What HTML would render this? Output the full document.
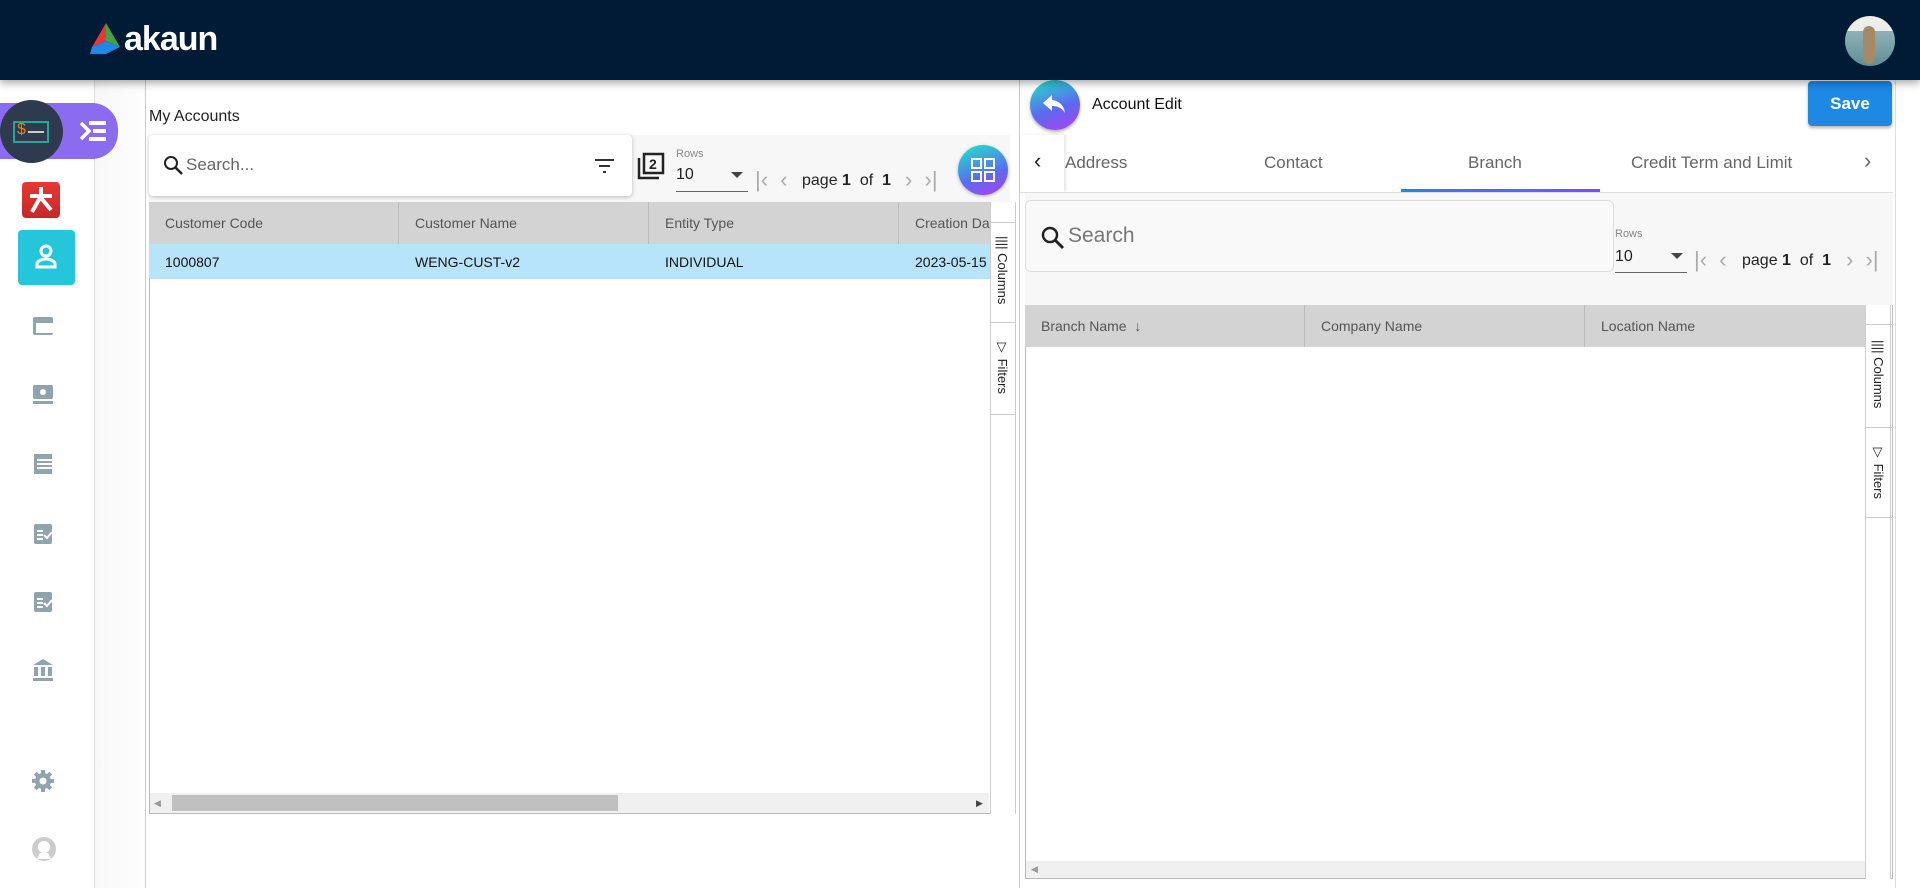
<!DOCTYPE html>
<html><head><meta charset="utf-8"><style>
*{box-sizing:border-box;margin:0;padding:0}
body{width:1920px;height:888px;overflow:hidden;background:#fff;font-family:"Liberation Sans",sans-serif;position:relative}
.a{position:absolute}
.hdr{left:0;top:0;width:1920px;height:80px;background:#011a35;box-shadow:0 3px 8px rgba(0,0,0,.35);z-index:5}
.gi{fill:#90a4ae}
.colh{position:absolute;top:0;height:42px;line-height:42px;font-size:14px;color:#555;padding-left:16px;border-right:1px solid #bbb}
.side{position:absolute;width:26px;background:#fff;border:1px solid #ccc}
.vt{position:absolute;writing-mode:vertical-rl;font-size:13px;color:#222}
.pg{font-size:16px;color:#222}
.ch{font-size:22px;color:#aaa}
</style></head><body>
<div class="a hdr">
 <svg class="a" style="left:88px;top:23px" width="36" height="32" viewBox="0 0 36 32"><polygon points="18,0 4,24 18,18" fill="#e53935"/><polygon points="18,0 32,24 18,18" fill="#43a047"/><polygon points="4,24 18,18 32,24 18,31 2,31" fill="#1e88e5"/></svg>
 <div class="a" style="left:124px;top:20px;color:#fff;font-size:34px;font-weight:bold;letter-spacing:-1px">akaun</div>
 <div class="a" style="left:1845px;top:16px;width:50px;height:50px;border-radius:50%;background:linear-gradient(#eeeee8 0 30%,#8fb1b6 30%,#5f8f96);overflow:hidden"><div class="a" style="left:18px;top:10px;width:12px;height:38px;background:#a58a6a;border-radius:6px"></div></div>
</div>
<!-- sidebar -->
<div class="a" style="left:94px;top:80px;width:52px;height:808px;background:linear-gradient(90deg,#f8f8f8,#fdfdfd);border-left:1px solid #ddd;border-right:1px solid #ccc"></div>
<div class="a" style="left:0;top:103px;width:95px;height:56px;background:#8b6cf0"></div>
<div class="a" style="left:66px;top:103px;width:52px;height:56px;border-radius:28px;background:#8b6cf0"></div>
<div class="a" style="left:0;top:100px;width:63px;height:63px;border-radius:50%;background:#2e3b4e"></div>
<div class="a" style="left:13px;top:121px;width:36px;height:22px;border:2px solid #26a69a"></div>
<div class="a" style="left:17px;top:121px;color:#f57c00;font-size:16px">$</div>
<div class="a" style="left:28px;top:131px;width:16px;height:2px;background:#ccc"></div>
<svg class="a" style="left:79px;top:120px" width="28" height="22"><path d="M2 3l8 8-8 8" stroke="#fff" stroke-width="3.5" fill="none"/><rect x="10" y="1" width="17" height="4" fill="#fff"/><rect x="14" y="9" width="13" height="4" fill="#fff"/><rect x="10" y="17" width="17" height="4" fill="#fff"/></svg>
<div class="a" style="left:22px;top:182px;width:38px;height:36px;border-radius:4px;background:linear-gradient(#e53935,#c62828)"></div>
<svg class="a" style="left:24px;top:184px" width="34" height="32"><path d="M17 3v10M6 12h22M17 12L8 28M17 14l10 12" stroke="#fff" stroke-width="4" fill="none"/></svg>
<div class="a" style="left:18px;top:230px;width:57px;height:55px;border-radius:4px;background:#26c6da"></div>
<svg class="a" style="left:34px;top:243px" width="24" height="28"><circle cx="12" cy="8" r="5" stroke="#fff" stroke-width="3" fill="none"/><path d="M3 24v-3c0-3 5-5 9-5s9 2 9 5v3z" stroke="#fff" stroke-width="3" fill="none"/></svg>
<svg class="a" style="left:31px;top:315px" width="24" height="22"><rect class="gi" x="2" y="2" width="20" height="18" rx="2"/><rect x="5" y="8" width="17" height="10" fill="#fff"/></svg>
<svg class="a" style="left:31px;top:383px" width="24" height="22"><rect class="gi" x="2" y="2" width="20" height="14" rx="2"/><circle cx="12" cy="9" r="3" fill="#fff"/><rect class="gi" x="2" y="18" width="20" height="3"/></svg>
<svg class="a" style="left:31px;top:452px" width="24" height="24"><rect class="gi" x="3" y="2" width="18" height="20"/><g fill="#fff"><rect x="6" y="7" width="15" height="2"/><rect x="6" y="11" width="15" height="2"/><rect x="6" y="15" width="15" height="2"/></g></svg>
<svg class="a" style="left:31px;top:522px" width="24" height="22"><rect class="gi" x="3" y="2" width="18" height="20" rx="2"/><g fill="#fff"><rect x="6" y="8" width="6" height="2"/><rect x="6" y="12" width="6" height="2"/><rect x="6" y="16" width="6" height="2"/></g><path d="M13 13l3 3 5-6" stroke="#fff" stroke-width="2" fill="none"/></svg>
<svg class="a" style="left:31px;top:590px" width="24" height="22"><rect class="gi" x="3" y="2" width="18" height="20" rx="2"/><g fill="#fff"><rect x="6" y="8" width="6" height="2"/><rect x="6" y="12" width="6" height="2"/><rect x="6" y="16" width="6" height="2"/></g><path d="M13 13l3 3 5-6" stroke="#fff" stroke-width="2" fill="none"/></svg>
<svg class="a" style="left:31px;top:657px" width="24" height="26"><polygon class="gi" points="12,2 22,8 2,8"/><rect class="gi" x="3" y="10" width="4" height="9"/><rect class="gi" x="10" y="10" width="4" height="9"/><rect class="gi" x="17" y="10" width="4" height="9"/><rect class="gi" x="2" y="21" width="20" height="3"/></svg>
<svg class="a" style="left:31px;top:769px" width="24" height="24"><circle class="gi" cx="12" cy="12" r="8"/><g class="gi"><rect x="10" y="1" width="4" height="22"/><rect x="1" y="10" width="22" height="4"/><rect x="10" y="1" width="4" height="22" transform="rotate(45 12 12)"/><rect x="10" y="1" width="4" height="22" transform="rotate(-45 12 12)"/></g><circle cx="12" cy="12" r="3.5" fill="#fff"/></svg>
<svg class="a" style="left:31px;top:836px" width="26" height="26"><circle cx="13" cy="13" r="12" fill="#ccc"/><circle cx="13" cy="11" r="6" fill="#fff"/><path d="M6 23h14l-3-6h-8z" fill="#fff"/></svg>

<!-- left pane -->
<div class="a" style="left:149px;top:108px;font-size:16px;color:#222">My Accounts</div>
<div class="a" style="left:149px;top:135px;width:861px;height:67px;background:#f7f7f7"></div>
<div class="a" style="left:149px;top:135px;width:483px;height:61px;background:#fff;border-radius:4px;box-shadow:0 1px 4px rgba(0,0,0,.25)"></div>
<svg class="a" style="left:163px;top:155px" width="22" height="22"><circle cx="8" cy="8" r="6" stroke="#222" stroke-width="2" fill="none"/><path d="M12 12l7 7" stroke="#222" stroke-width="2.5"/></svg>
<div class="a" style="left:186px;top:155px;font-size:17px;color:#666">Search...</div>
<svg class="a" style="left:594px;top:158px" width="22" height="16"><rect x="1" y="1" width="19" height="2" fill="#333"/><rect x="5" y="7" width="11" height="2" fill="#333"/><rect x="9" y="13" width="3" height="2" fill="#333"/></svg>
<svg class="a" style="left:636px;top:152px" width="30" height="30"><path d="M3 6v20h20" stroke="#222" stroke-width="2.5" fill="none"/><rect x="8" y="2" width="19" height="19" stroke="#222" stroke-width="2.5" fill="none"/><text x="13" y="17" font-size="14" font-weight="bold" font-family="Liberation Sans" fill="#222">2</text></svg>
<div class="a" style="left:676px;top:148px;font-size:11px;color:#888">Rows</div>
<div class="a" style="left:676px;top:166px;font-size:16px;color:#222">10</div>
<div class="a" style="left:731px;top:172px;border:6px solid transparent;border-top:6px solid #444"></div>
<div class="a" style="left:676px;top:191px;width:72px;height:1px;background:#666"></div>
<div class="a ch" style="left:755px;top:167px">|‹&nbsp;&nbsp;‹</div>
<div class="a pg" style="left:802px;top:172px">page <b>1</b>&nbsp; of&nbsp; <b>1</b></div>
<div class="a ch" style="left:905px;top:167px">›&nbsp;&nbsp;›|</div>
<div class="a" style="left:958px;top:145px;width:50px;height:50px;border-radius:50%;background:linear-gradient(160deg,#1de9c6,#5b6bf0 60%,#b03ef0);box-shadow:0 1px 3px rgba(0,0,0,.3)"></div>
<svg class="a" style="left:971px;top:158px" width="24" height="24"><g stroke="#fff" stroke-width="2" fill="none"><rect x="1" y="1" width="9" height="9"/><rect x="14" y="1" width="9" height="9"/><rect x="1" y="14" width="9" height="9"/><rect x="14" y="14" width="9" height="9"/></g></svg>
<!-- left grid -->
<div class="a" style="left:149px;top:202px;width:867px;height:612px;border:1px solid #bbb;border-top:none"></div>
<div class="a" style="left:149px;top:202px;width:841px;height:42px;background:#d3d3d3;overflow:hidden">
 <div class="colh" style="left:0;width:250px">Customer Code</div><div class="colh" style="left:250px;width:250px">Customer Name</div><div class="colh" style="left:500px;width:250px">Entity Type</div><div class="colh" style="left:750px;width:250px;border:none">Creation Date</div>
</div>
<div class="a" style="left:149px;top:244px;width:841px;height:35px;background:#b7e4fb;font-size:14px;color:#111;overflow:hidden;white-space:nowrap">
 <span class="a" style="left:16px;top:10px">1000807</span><span class="a" style="left:266px;top:10px">WENG-CUST-v2</span><span class="a" style="left:516px;top:10px">INDIVIDUAL</span><span class="a" style="left:766px;top:10px">2023-05-15</span>
</div>
<div class="side" style="left:990px;top:202px;height:612px;border-top:none;border-bottom:none"></div>
<div class="a" style="left:990px;top:222px;width:26px;height:101px;border-top:1px solid #ccc;border-bottom:1px solid #ccc"></div>
<div class="vt" style="left:995px;top:236px">|||| Columns</div>
<div class="a" style="left:990px;top:323px;width:26px;height:92px;border-bottom:1px solid #ccc"></div>
<div class="vt" style="left:995px;top:340px">▽ Filters</div>
<div class="a" style="left:150px;top:793px;width:839px;height:20px;background:#f0f0f0"></div>
<div class="a" style="left:172px;top:795px;width:446px;height:16px;background:#c0c0c0"></div>
<div class="a" style="left:154px;top:798px;font-size:9px;color:#999">◀</div>
<div class="a" style="left:976px;top:798px;font-size:9px;color:#444">▶</div>

<!-- right pane -->
<div class="a" style="left:1019px;top:80px;width:1px;height:808px;background:#ccc"></div>
<div class="a" style="left:1895px;top:80px;width:1px;height:808px;background:#ddd"></div>
<div class="a" style="left:1030px;top:80px;width:50px;height:50px;border-radius:50%;background:linear-gradient(160deg,#1de9c6,#5b6bf0 55%,#b03ef0);box-shadow:0 2px 3px rgba(0,0,0,.3)"></div>
<svg class="a" style="left:1041px;top:91px" width="28" height="28"><path d="M11 4L2 12l9 8v-5c6 0 10 2 13 7-1-7-5-12-13-13z" fill="#fff"/></svg>
<div class="a" style="left:1092px;top:96px;font-size:16px;color:#111">Account Edit</div>
<div class="a" style="left:1808px;top:81px;width:84px;height:45px;background:#1e88e5;border-radius:4px;color:#fff;font-size:17px;font-weight:bold;text-align:center;line-height:45px;box-shadow:0 2px 3px rgba(0,0,0,.3)">Save</div>
<div class="a" style="left:1020px;top:135px;width:44px;height:57px;background:#fff;box-shadow:2px 0 3px rgba(0,0,0,.1)"></div>
<div class="a" style="left:1034px;top:148px;font-size:22px;color:#222">‹</div>
<div class="a" style="left:1020px;top:192px;width:873px;height:1px;background:#e0e0e0"></div>
<div class="a" style="left:1065px;top:153px;font-size:17px;color:#666">Address</div>
<div class="a" style="left:1264px;top:153px;font-size:17px;color:#666">Contact</div>
<div class="a" style="left:1468px;top:153px;font-size:17px;color:#666">Branch</div>
<div class="a" style="left:1631px;top:153px;font-size:17px;color:#666">Credit Term and Limit</div>
<div class="a" style="left:1864px;top:148px;font-size:22px;color:#666">›</div>
<div class="a" style="left:1401px;top:189px;width:199px;height:3px;background:linear-gradient(90deg,#1e88e5,#7c4dff)"></div>
<div class="a" style="left:1025px;top:193px;width:868px;height:112px;background:#f7f7f7"></div>
<div class="a" style="left:1025px;top:200px;width:589px;height:72px;background:#f9f9f9;border:1px solid #ddd;border-radius:6px"></div>
<svg class="a" style="left:1040px;top:225px" width="26" height="26"><circle cx="10" cy="10" r="7" stroke="#222" stroke-width="2.5" fill="none"/><path d="M15 15l8 8" stroke="#222" stroke-width="3"/></svg>
<div class="a" style="left:1068px;top:224px;font-size:21px;color:#777">Search</div>
<div class="a" style="left:1615px;top:228px;font-size:11px;color:#888">Rows</div>
<div class="a" style="left:1615px;top:248px;font-size:16px;color:#222">10</div>
<div class="a" style="left:1671px;top:253px;border:6px solid transparent;border-top:6px solid #444"></div>
<div class="a" style="left:1615px;top:272px;width:72px;height:1px;background:#666"></div>
<div class="a ch" style="left:1694px;top:247px">|‹&nbsp;&nbsp;‹</div>
<div class="a pg" style="left:1742px;top:252px">page <b>1</b>&nbsp; of&nbsp; <b>1</b></div>
<div class="a ch" style="left:1846px;top:247px">›&nbsp;&nbsp;›|</div>
<div class="a" style="left:1025px;top:305px;width:868px;height:574px;border:1px solid #bbb;border-top:none"></div>
<div class="a" style="left:1025px;top:305px;width:840px;height:42px;background:#d3d3d3">
 <div class="colh" style="left:0;width:280px">Branch Name &nbsp;↓</div><div class="colh" style="left:280px;width:280px">Company Name</div><div class="colh" style="left:560px;width:280px;border:none">Location Name</div>
</div>
<div class="side" style="left:1865px;top:305px;height:574px;border-top:none;border-bottom:none"></div>
<div class="a" style="left:1865px;top:324px;width:28px;height:104px;border-top:1px solid #ccc;border-bottom:1px solid #ccc"></div>
<div class="vt" style="left:1871px;top:340px">|||| Columns</div>
<div class="a" style="left:1865px;top:428px;width:28px;height:90px;border-bottom:1px solid #ccc"></div>
<div class="vt" style="left:1871px;top:445px">▽ Filters</div>
<div class="a" style="left:1026px;top:861px;width:839px;height:17px;background:#f0f0f0"></div>
<div class="a" style="left:1031px;top:864px;font-size:9px;color:#999">◀</div>
</body></html>
